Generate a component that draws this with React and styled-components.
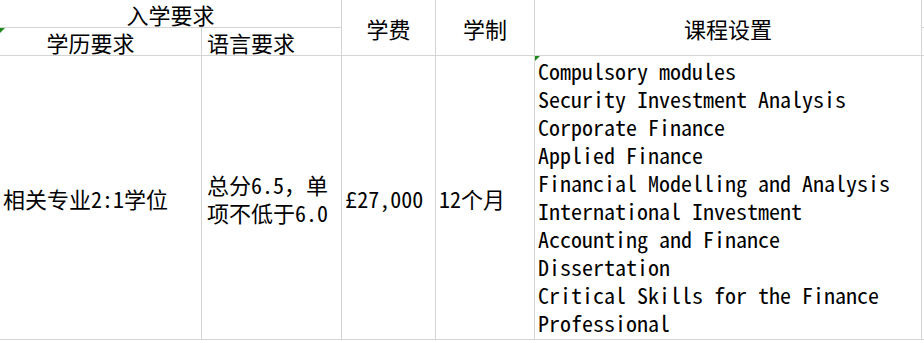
import React from 'react'
import styled, { createGlobalStyle } from 'styled-components'

const GlobalStyle = createGlobalStyle`
  html, body {
    margin: 0;
    padding: 0;
    background: #ffffff;
  }
`

const Sheet = styled.div`
  display: grid;
  grid-template-columns: 201px 139px 93px 98px 386px 2px;
  grid-template-rows: 27px 27px 283px;
  gap: 1px;
  padding-bottom: 1px;
  width: 924px;
  background: #d4d4d4;
  font-family: "Noto Sans Mono CJK SC", "Liberation Mono", "Noto Sans CJK SC", monospace;
  font-size: 22px;
  color: #000;
  overflow: hidden;
`

const Cell = styled.div`
  position: relative;
  background: #fff;
  display: flex;
  align-items: center;
  justify-content: ${p => p.$align || 'center'};
  padding: ${p => p.$pad || '0'};
  grid-column: ${p => p.$col || 'auto'};
  grid-row: ${p => p.$row || 'auto'};
  line-height: 28px;
  white-space: pre;
  overflow: hidden;
`

const Marker = styled.span`
  position: absolute;
  top: 0;
  left: 0;
  width: 0;
  height: 0;
  border-top: 5px solid #1e8a1e;
  border-right: 5px solid transparent;
`

const Lines = styled.div`
  display: flex;
  flex-direction: column;
`

const modules = [
  'Compulsory modules',
  'Security Investment Analysis',
  'Corporate Finance',
  'Applied Finance',
  'Financial Modelling and Analysis',
  'International Investment',
  'Accounting and Finance',
  'Dissertation',
  'Critical Skills for the Finance',
  'Professional',
]

export default function App() {
  return (
    <>
      <GlobalStyle />
      <Sheet>
        <Cell $col="1 / 3" $row="1">入学要求</Cell>
        <Cell $col="3" $row="1 / 3">学费</Cell>
        <Cell $col="4" $row="1 / 3">学制</Cell>
        <Cell $col="5" $row="1 / 3">课程设置</Cell>
        <Cell $col="6" $row="1" />
        <Cell $col="1" $row="2" $pad="0 20px 0 0">
          <Marker />
          学历要求
        </Cell>
        <Cell $col="2" $row="2" $align="flex-start" $pad="0 0 0 5px">语言要求</Cell>
        <Cell $col="6" $row="2" />
        <Cell $col="1" $row="3" $align="flex-start" $pad="0 0 0 3px">相关专业2:1学位</Cell>
        <Cell $col="2" $row="3" $align="flex-start" $pad="0 0 0 5px">
          <Lines>
            <span>总分6.5，单</span>
            <span>项不低于6.0</span>
          </Lines>
        </Cell>
        <Cell $col="3" $row="3" $align="flex-start" $pad="0 0 0 3px">£27,000</Cell>
        <Cell $col="4" $row="3" $align="flex-start" $pad="0 0 0 3px">12个月</Cell>
        <Cell $col="5" $row="3" $align="flex-start" $pad="0 0 4px 3px">
          <Marker />
          <Lines>
            {modules.map(m => (
              <span key={m}>{m}</span>
            ))}
          </Lines>
        </Cell>
        <Cell $col="6" $row="3" />
      </Sheet>
    </>
  )
}
